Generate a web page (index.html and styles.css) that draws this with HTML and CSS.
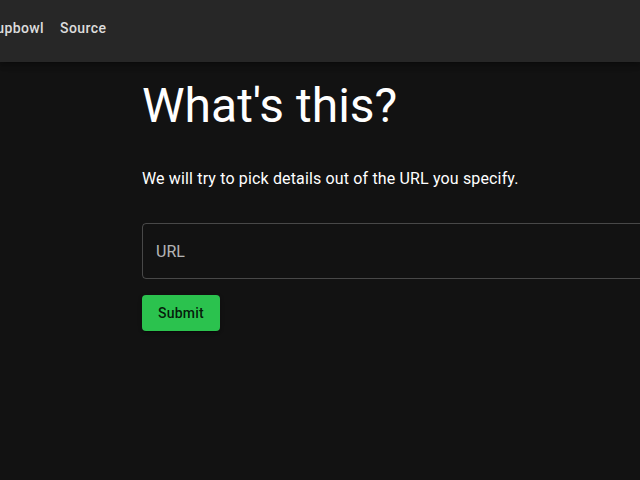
FILE: index.html
```html
<!DOCTYPE html>
<html lang="en">
<head>
<meta charset="utf-8">
<title>What's this?</title>
<link rel="stylesheet" href="styles.css">
</head>
<body>
<header class="appbar">
  <nav class="nav">
    <a class="nav-link" href="#">Soupbowl</a>
    <a class="nav-link" href="#">Source</a>
  </nav>
</header>
<main class="content">
  <h1 class="title">What's this?</h1>
  <p class="lead">We will try to pick details out of the URL you specify.</p>
  <form class="form">
    <div class="field">
      <input class="field-input" type="text" placeholder="URL">
    </div>
    <button class="submit" type="button">Submit</button>
  </form>
</main>
</body>
</html>
```

FILE: styles.css
```css
html {
  overflow: hidden;
}
body {
  margin: 0;
  background: #121212;
  color: #fff;
  font-family: Roboto, "Liberation Sans", sans-serif;
  min-height: 480px;
}
.appbar {
  height: 62px;
  box-sizing: border-box;
  padding-top: 18px;
  background: #272727;
  box-shadow: 0 2px 4px -1px rgba(0,0,0,0.2), 0 4px 5px 0 rgba(0,0,0,0.14), 0 1px 10px 0 rgba(0,0,0,0.12);
}
.nav {
  display: flex;
  gap: 16px;
  margin-left: -21px;
}
.nav-link {
  font-size: 14px;
  line-height: 20px;
  font-weight: 500;
  letter-spacing: 0.02857em;
  color: rgba(255,255,255,0.85);
  text-decoration: none;
}
.content {
  padding-left: 142px;
  padding-top: 16px;
}
.title {
  margin: 0;
  font-size: 48px;
  line-height: 56px;
  font-weight: 400;
}
.lead {
  margin: 33px 0 0;
  font-size: 16px;
  line-height: 24px;
  letter-spacing: 0.00938em;
}
.form {
  margin-top: 32px;
  display: flex;
  flex-direction: column;
  align-items: flex-start;
  gap: 16px;
}
.field {
  width: 620px;
  height: 56px;
  box-sizing: border-box;
  border: 1px solid rgba(255,255,255,0.23);
  border-radius: 4px;
  display: flex;
  align-items: center;
}
.field-input {
  flex: 1;
  background: transparent;
  border: 0;
  outline: none;
  padding: 0 13px;
  font-family: inherit;
  font-size: 16px;
  line-height: 23px;
  color: #fff;
}
.field-input::placeholder {
  color: rgba(255,255,255,0.7);
  opacity: 1;
}
.submit {
  height: 36px;
  padding: 0 16px;
  border: 0;
  border-radius: 4px;
  background: #2bc24e;
  color: rgba(0,0,0,0.87);
  font-family: inherit;
  font-size: 14px;
  font-weight: 500;
  letter-spacing: 0.2px;
  box-shadow: 0 3px 1px -2px rgba(0,0,0,0.2), 0 2px 2px 0 rgba(0,0,0,0.14), 0 1px 5px 0 rgba(0,0,0,0.12);
  cursor: pointer;
}
```
